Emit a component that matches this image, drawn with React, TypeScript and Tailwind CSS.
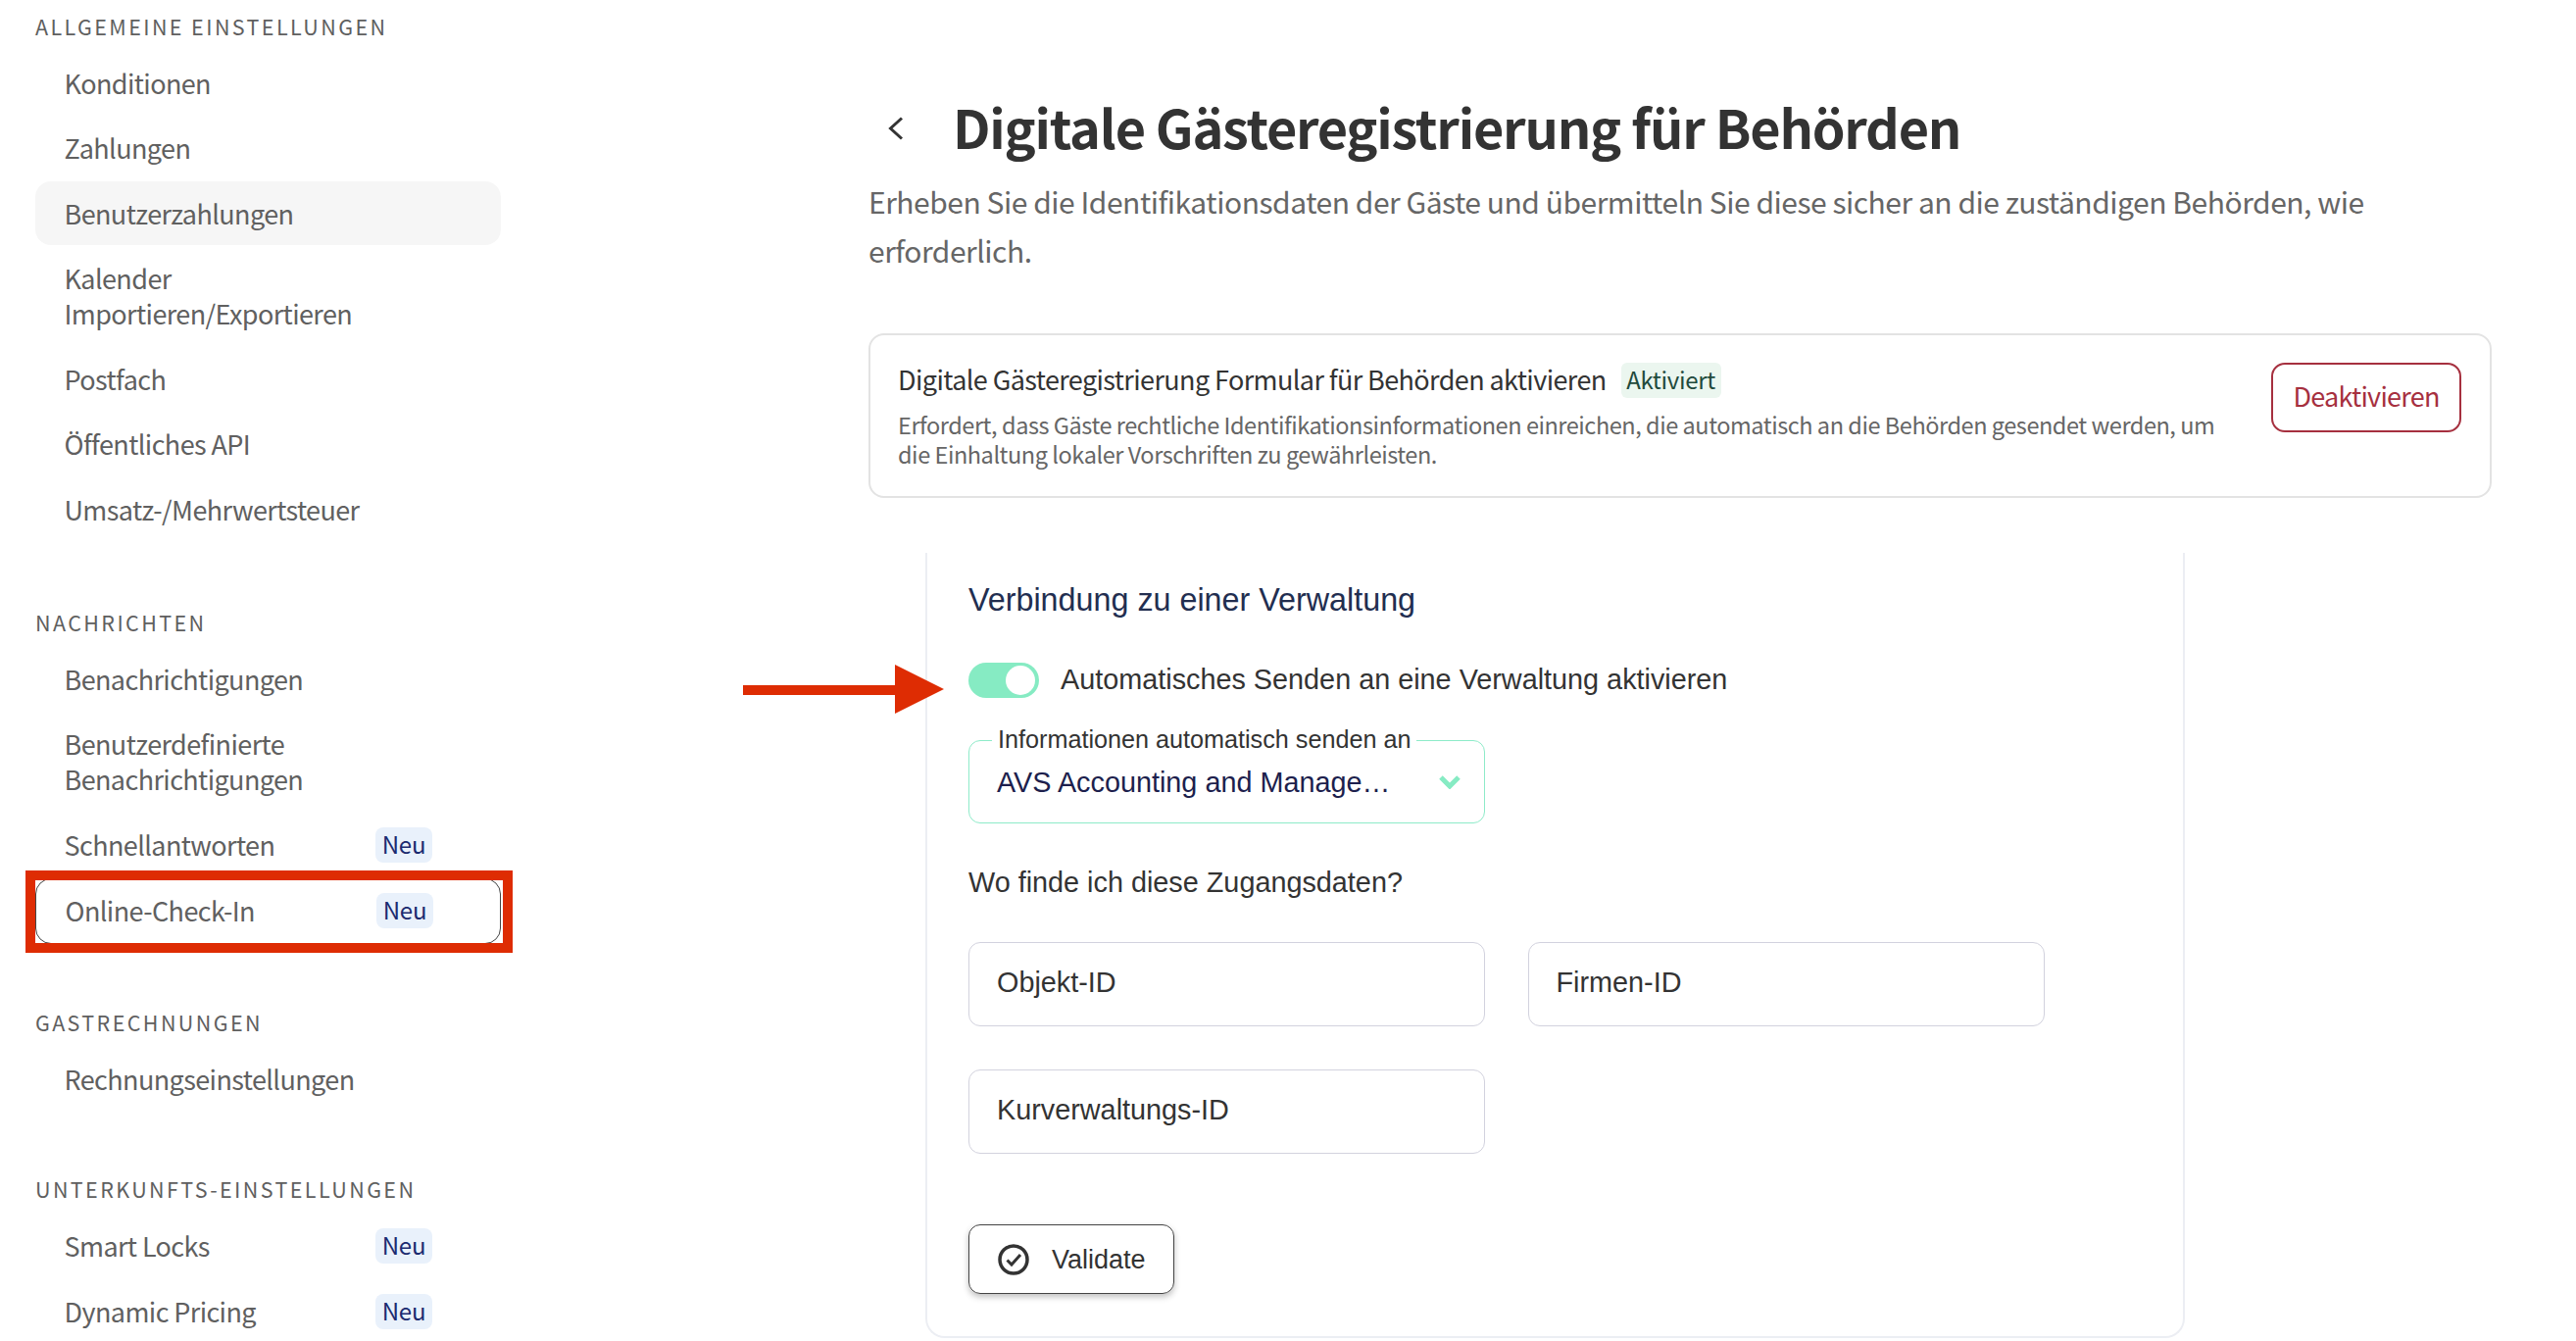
import React from "react";

const sans = "font-['Noto_Sans_CJK_SC','Noto_Sans',sans-serif]";

function Neu() {
  return (
    <span className="flex h-[36px] w-[58px] shrink-0 items-center justify-center rounded-[8px] bg-[#e9f1fb] pb-[2px] text-[24px] leading-none tracking-[-0.2px] text-[#1b2a70]">
      Neu
    </span>
  );
}

function Item({ children, neu, active, outlined }: { children: React.ReactNode; neu?: boolean; active?: boolean; outlined?: boolean }) {
  return (
    <div
      className={
        "relative mb-[1.5px] flex w-[475px] items-center rounded-[16px] py-[14.5px] pl-[29.5px] text-[27px] leading-[36px] tracking-[-0.6px] text-[#606060] " +
        (active ? "bg-[#f6f6f6] " : "") +
        (outlined ? "border border-[#444444] py-[13.5px] pl-[28.5px] " : "")
      }
    >
      <span className="w-[317.5px] shrink-0 -translate-y-[0.5px]">{children}</span>
      {neu && <Neu />}
      {outlined && <span className="pointer-events-none absolute -top-[9px] -bottom-[10px] -left-[11px] -right-[13px] border-[10px] border-[#de2c03]" />}
    </div>
  );
}

function Section({ title, children, mb }: { title: string; children: React.ReactNode; mb: string }) {
  return (
    <div className={mb}>
      <div className="flex h-[51px] items-center text-[21.5px] leading-none tracking-[2.4px] text-[#5f5f5f]">{title}</div>
      {children}
    </div>
  );
}

function Field({ label }: { label: string }) {
  return (
    <div className="flex h-[86px] w-[527px] items-center rounded-[12px] border border-[#d2d2de] pb-[3px] pl-[28px] text-[28.8px] text-[#333333]">
      {label}
    </div>
  );
}

export default function App() {
  return (
    <div className={"relative flex h-[1368px] w-[2628px] overflow-hidden bg-white " + sans}>
      <aside className="w-[886px] shrink-0 pl-[36px] pt-[1px]">
        <Section title="ALLGEMEINE EINSTELLUNGEN" mb="mb-[57px]">
          <Item>Konditionen</Item>
          <Item>Zahlungen</Item>
          <Item active>Benutzerzahlungen</Item>
          <Item>
            Kalender
            <br />
            Importieren/Exportieren
          </Item>
          <Item>Postfach</Item>
          <Item>Öffentliches API</Item>
          <Item>Umsatz-/Mehrwertsteuer</Item>
        </Section>
        <Section title="NACHRICHTEN" mb="mb-[55px]">
          <Item>Benachrichtigungen</Item>
          <Item>
            Benutzerdefinierte
            <br />
            Benachrichtigungen
          </Item>
          <Item neu>Schnellantworten</Item>
          <Item neu outlined>Online-Check-In</Item>
        </Section>
        <Section title="GASTRECHNUNGEN" mb="mb-[54px]">
          <Item>Rechnungseinstellungen</Item>
        </Section>
        <Section title="UNTERKUNFTS-EINSTELLUNGEN" mb="">
          <Item neu>Smart Locks</Item>
          <Item neu>Dynamic Pricing</Item>
        </Section>
      </aside>

      <main className="w-[1656px] shrink-0 pt-[100px]">
        <div className="flex h-[60px] items-center">
          <svg className="ml-[20px] mr-[50px] mt-[1px] h-[24px] w-[16px] shrink-0" viewBox="0 0 16 24" fill="none" stroke="#333333" strokeWidth="3">
            <path d="M14 1.5 2.5 12 14 22.5" />
          </svg>
          <h1 className="-mt-[2px] whitespace-nowrap text-[54px] font-bold leading-[60px] tracking-[-1.2px] text-[#333333]">Digitale Gästeregistrierung für Behörden</h1>
        </div>
        <p className="mt-[20px] whitespace-nowrap text-[30px] leading-[50px] tracking-[-0.47px] text-[#666666]">
          Erheben Sie die Identifikationsdaten der Gäste und übermitteln Sie diese sicher an die zuständigen Behörden, wie
          <br />
          erforderlich.
        </p>

        <section className="mt-[60px] flex h-[168px] items-start justify-between rounded-[16px] border-2 border-[#e3e3e3] pl-[28px] pr-[29px] pt-[28px]">
          <div>
            <div className="flex h-[36px] items-center">
              <span className="-mt-[2px] text-[27px] leading-[36px] tracking-[-0.6px] text-[#333333]">Digitale Gästeregistrierung Formular für Behörden aktivieren</span>
              <span className="ml-[15px] flex h-[36px] w-[102px] items-center justify-center rounded-[6px] bg-[#ebf6ef] pb-[2px] text-[24px] tracking-[-0.3px] text-[#1f4a3c]">Aktiviert</span>
            </div>
            <p className="mt-[12px] whitespace-nowrap text-[23.5px] leading-[30px] tracking-[-0.45px] text-[#666666]">
              Erfordert, dass Gäste rechtliche Identifikationsinformationen einreichen, die automatisch an die Behörden gesendet werden, um
              <br />
              die Einhaltung lokaler Vorschriften zu gewährleisten.
            </p>
          </div>
          <button className="flex h-[71px] w-[194px] shrink-0 items-center justify-center rounded-[14px] border-2 border-[#a6303f] pb-[2px] text-[27px] tracking-[-0.75px] text-[#a6303f]">Deaktivieren</button>
        </section>

        <section className="ml-[58px] mt-[56px] h-[801px] w-[1285px] rounded-b-[20px] border-x-2 border-b-2 border-[#eceef3] pl-[42px] pt-[28px] font-['Liberation_Sans',sans-serif]">
          <h2 className="text-[32.3px] leading-[40px] text-[#222e50]">Verbindung zu einer Verwaltung</h2>

          <div className="mt-[44px] flex h-[36px] items-center">
            <div className="flex h-[36px] w-[72px] items-center justify-end rounded-full bg-[#86ebc3] pr-[4px]">
              <span className="h-[30px] w-[30px] rounded-full bg-white" />
            </div>
            <span className="ml-[22px] text-[28.8px] text-[#333333]">Automatisches Senden an eine Verwaltung aktivieren</span>
          </div>

          <div className="relative mt-[43px] flex h-[85px] w-[527px] items-start rounded-[12px] border border-[#8eebc9] pl-[28px] pt-[24px] text-[28.8px] leading-[36px] text-[#1d1f4d]">
            AVS Accounting and Manage…
            <span className="absolute -top-[17px] left-[23px] whitespace-nowrap bg-white px-[6px] text-[25.2px] leading-[30px] text-[#333333]">Informationen automatisch senden an</span>
            <svg className="absolute left-[479px] top-[35px] h-[14px] w-[22px]" viewBox="0 0 22 14" fill="none" stroke="#86ebc3" strokeWidth="5">
              <path d="M2 2 11 11 20 2" />
            </svg>
          </div>

          <p className="mt-[40px] text-[28.8px] leading-[40px] text-[#333333]">Wo finde ich diese Zugangsdaten?</p>

          <div className="mt-[41px] flex gap-[43.5px]">
            <Field label="Objekt-ID" />
            <Field label="Firmen-ID" />
          </div>
          <div className="mt-[44px]">
            <Field label="Kurverwaltungs-ID" />
          </div>

          <button className="mt-[72px] flex h-[71px] w-[210px] items-center rounded-[12px] border border-[#444444] pl-[28px] text-[27px] text-[#333333] shadow-[0_3px_6px_rgba(0,0,0,0.25)]">
            <svg className="h-[34px] w-[34px]" viewBox="0 0 34 34" fill="none" stroke="#333333" strokeWidth="3.5">
              <circle cx="17" cy="17" r="14" />
              <path d="M10.5 17.5 15 22 24 12" strokeWidth="3" />
            </svg>
            <span className="ml-[22px] translate-y-[1px]">Validate</span>
          </button>
        </section>
      </main>

      <svg className="absolute left-[758px] top-[678px] h-[50px] w-[205px]" viewBox="0 0 205 50" fill="#de2c03">
        <path d="M0 21H155V0L205 25 155 50V31H0Z" />
      </svg>
    </div>
  );
}
